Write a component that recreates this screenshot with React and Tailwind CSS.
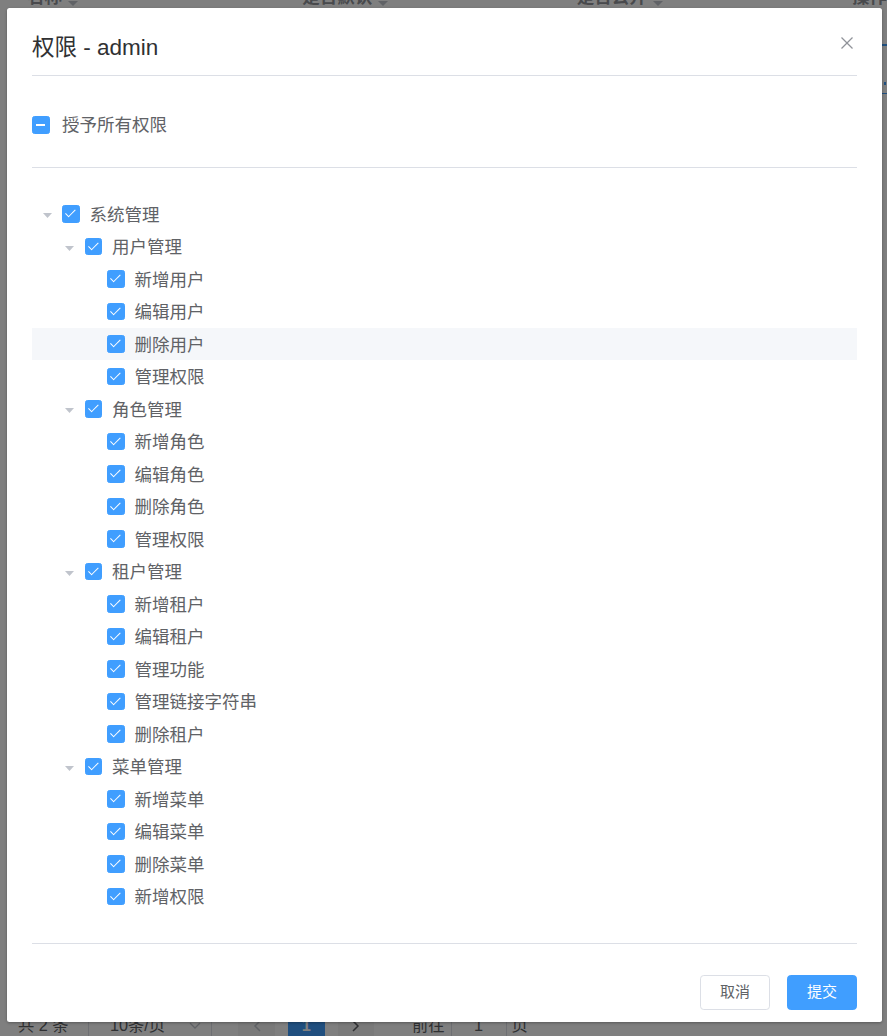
import React from "react";

const tree = [
  {
    label: "系统管理",
    children: [
      { label: "用户管理", children: ["新增用户", "编辑用户", "删除用户", "管理权限"] },
      { label: "角色管理", children: ["新增角色", "编辑角色", "删除角色", "管理权限"] },
      { label: "租户管理", children: ["新增租户", "编辑租户", "管理功能", "管理链接字符串", "删除租户"] },
      { label: "菜单管理", children: ["新增菜单", "编辑菜单", "删除菜单", "新增权限"] },
    ],
  },
];

function flatten() {
  const rows = [];
  tree.forEach((a) => {
    rows.push({ label: a.label, level: 0, parent: true });
    a.children.forEach((b) => {
      rows.push({ label: b.label, level: 1, parent: true });
      b.children.forEach((c) => {
        rows.push({ label: c, level: 2, parent: false, hl: b.label === "用户管理" && c === "删除用户" });
      });
    });
  });
  return rows;
}

const indent = ["pl-0", "pl-[22.5px]", "pl-[45px]"];

function Checked() {
  return (
    <span className="relative shrink-0 box-border w-[17.5px] h-[17.5px] rounded-[2.5px] border-[1.25px] border-[#409eff] bg-[#409eff]">
      <span className="absolute left-[5px] top-[1.25px] box-content w-[3.75px] h-[8.75px] border-r-[1.25px] border-b-[1.25px] border-white rotate-45" />
    </span>
  );
}

function Indeterminate() {
  return (
    <span className="flex items-center justify-center shrink-0 box-border w-[17.5px] h-[17.5px] rounded-[2.5px] border-[1.25px] border-[#409eff] bg-[#409eff]">
      <span className="w-[9px] h-[2px] bg-white" />
    </span>
  );
}

function Caret() {
  return (
    <svg width="9" height="5" viewBox="0 0 9 5" className="translate-y-[2px]">
      <polygon points="0,0 9,0 4.5,5" fill="#c0c4cc" />
    </svg>
  );
}

function SortCaret() {
  return (
    <svg width="10" height="17" viewBox="0 0 10 17" className="ml-[6px]">
      <polygon points="5,0 10,5 0,5" fill="#c0c4cc" />
      <polygon points="0,12 10,12 5,17" fill="#c0c4cc" />
    </svg>
  );
}

export default function App() {
  const rows = flatten();
  return (
    <div className="relative w-[887px] h-[1036px] overflow-hidden bg-white font-['Liberation_Sans','Noto_Sans_CJK_SC',sans-serif]">
      {/* background page */}
      <div className="flex flex-col h-[1036px]">
        <div className="flex -mt-[15px] h-[24px] items-center text-[17.5px] font-bold text-[#909399] shrink-0">
          <div className="w-[281px] pl-[27px] flex items-center">名称<SortCaret /></div>
          <div className="w-[280px] pl-[27px] flex items-center">是否默认<SortCaret /></div>
          <div className="w-[281px] pl-[27px] flex items-center">是否公开<SortCaret /></div>
          <div className="flex-1 pl-[27px] flex items-center whitespace-nowrap">操作</div>
        </div>
        <div className="flex justify-end shrink-0">
          <div className="w-[5px] flex flex-col">
            <div className="mt-[35px] h-[1.5px] bg-[#409eff]" />
            <div className="mt-[36px] ml-[2px] w-[2px] h-[3px] bg-[#409eff]" />
            <div className="mt-[8px] h-[1.5px] bg-[#409eff]" />
          </div>
        </div>
        <div className="flex-1" />
        <div className="flex items-center h-[35px] shrink-0 -mb-[7px] text-[16.25px] text-[#606266]">
          <span className="ml-[18px] w-[70px]">共 2 条</span>
          <div className="flex items-center w-[124px] h-[35px] border-[1.25px] border-[#dcdfe6] rounded-[3.75px] pl-[21px] pr-[10px]">
            <span className="flex-1">10条/页</span>
            <svg width="12" height="8" viewBox="0 0 12 8"><polyline points="1,1 6,6 11,1" fill="none" stroke="#c0c4cc" strokeWidth="1.3" /></svg>
          </div>
          <div className="ml-[26px] w-[37px] h-[35px] bg-[#f4f4f5] rounded-[2.5px] flex items-center justify-center">
            <svg width="8" height="12" viewBox="0 0 8 12"><polyline points="7,1 2,6 7,11" fill="none" stroke="#c0c4cc" strokeWidth="1.5" /></svg>
          </div>
          <div className="ml-[13px] w-[36.5px] h-[35px] bg-[#409eff] rounded-[2.5px] flex items-center justify-center text-white font-bold">1</div>
          <div className="ml-[13.5px] w-[36px] h-[35px] bg-[#f4f4f5] rounded-[2.5px] flex items-center justify-center">
            <svg width="8" height="12" viewBox="0 0 8 12"><polyline points="1,1 6,6 1,11" fill="none" stroke="#606266" strokeWidth="1.5" /></svg>
          </div>
          <span className="ml-[38px]">前往</span>
          <div className="ml-[6px] w-[56px] h-[35px] border-[1.25px] border-[#dcdfe6] rounded-[3.75px] flex items-center justify-center">1</div>
          <span className="ml-[5px]">页</span>
        </div>
      </div>

      {/* overlay */}
      <div className="absolute inset-0 bg-black/50" />

      {/* dialog */}
      <div className="absolute left-[7px] top-[8px] w-[875px] bg-white rounded-[2.5px] shadow-[0_1px_3px_rgba(0,0,0,0.3)] px-[25px]">
        <div className="flex items-start justify-between pt-[25px] pb-[12px] border-b border-[#dcdfe6]">
          <span className="text-[22.5px] leading-[30px] text-[#303133]">权限 - admin</span>
          <span className="w-[20px] h-[20px] flex items-center justify-center">
            <svg width="12" height="12" viewBox="0 0 12 12">
              <line x1="0.5" y1="0.5" x2="11.5" y2="11.5" stroke="#909399" strokeWidth="1.3" />
              <line x1="11.5" y1="0.5" x2="0.5" y2="11.5" stroke="#909399" strokeWidth="1.3" />
            </svg>
          </span>
        </div>

        <div className="pt-[38px] pb-[30px]">
          <div className="flex items-center h-[22px]">
            <Indeterminate />
            <span className="pl-[12.5px] text-[17.5px] text-[#606266]">授予所有权限</span>
          </div>
          <div className="mt-[30.5px] mb-[30px] h-px bg-[#dcdfe6]" />
          <div className="flex flex-col">
            {rows.map((r, i) => (
              <div
                key={i}
                className={
                  "flex items-center h-[32.5px] " + indent[r.level] + (r.hl ? " bg-[#f5f7fa]" : "")
                }
              >
                <span className="w-[30px] h-full flex items-center justify-center shrink-0">
                  {r.parent ? <Caret /> : null}
                </span>
                <Checked />
                <span className="ml-[10px] pt-[2px] text-[17.5px] text-[#606266] whitespace-nowrap">{r.label}</span>
              </div>
            ))}
          </div>
        </div>

        <div className="flex justify-end gap-[17px] border-t border-[#dcdfe6] pt-[31.5px] pb-[12px]">
          <button className="w-[70px] h-[35px] box-border border-[1.25px] border-[#dcdfe6] bg-white rounded-[3.75px] text-[15px] text-[#606266] flex items-center justify-center">
            取消
          </button>
          <button className="w-[70px] h-[35px] box-border border-[1.25px] border-[#409eff] bg-[#409eff] rounded-[3.75px] text-[15px] text-white flex items-center justify-center">
            提交
          </button>
        </div>
      </div>
    </div>
  );
}
